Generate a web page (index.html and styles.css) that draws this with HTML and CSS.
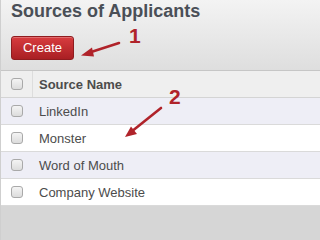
FILE: index.html
```html
<!DOCTYPE html>
<html>
<head>
<meta charset="utf-8">
<link rel="stylesheet" href="styles.css">
</head>
<body>
<div class="page">
  <div class="head">
    <h1 class="title">Sources of Applicants</h1>
    <div class="actions"><button class="btn">Create</button></div>
  </div>
  <div class="table">
    <div class="row thead">
      <div class="cell chk"><span class="box"></span></div>
      <div class="cell name">Source Name</div>
    </div>
    <div class="row odd">
      <div class="cell chk"><span class="box"></span></div>
      <div class="cell">LinkedIn</div>
    </div>
    <div class="row">
      <div class="cell chk"><span class="box"></span></div>
      <div class="cell">Monster</div>
    </div>
    <div class="row odd">
      <div class="cell chk"><span class="box"></span></div>
      <div class="cell">Word of Mouth</div>
    </div>
    <div class="row">
      <div class="cell chk"><span class="box"></span></div>
      <div class="cell">Company Website</div>
    </div>
  </div>
  <div class="foot"></div>

  <span class="num n1">1</span>
  <span class="num n2">2</span>
  <svg class="arrows" width="288" height="211" viewBox="0 0 288 211">
    <line x1="119" y1="43" x2="88" y2="53" stroke="#b0232a" stroke-width="2.6" stroke-linecap="round"/>
    <polygon points="81,55.5 92,47.5 94,56.5" fill="#b0232a"/>
    <line x1="161" y1="108" x2="131" y2="132" stroke="#b0232a" stroke-width="2.6" stroke-linecap="round"/>
    <polygon points="125,137 131,126.5 137,134" fill="#b0232a"/>
  </svg>
</div>
</body>
</html>
```
FILE: styles.css
```css
html, body {
  margin: 0;
  padding: 0;
  background: #ffffff;
}
.page {
  position: relative;
  display: flex;
  flex-direction: column;
  width: 100%;
  height: 100vh;
  min-height: 211px;
  overflow: hidden;
  font-family: "Liberation Sans", Arial, sans-serif;
  color: #4c4c4c;
  box-sizing: border-box;
  border-left: 1px solid #cfcfcf;
}
.head {
  height: 71px;
  flex: none;
  box-sizing: border-box;
  background: linear-gradient(#f3f3f3, #dedede);
  border-bottom: 1px solid #c6c6c6;
  padding-left: 10px;
}
.title {
  margin: 0;
  font-size: 18px;
  line-height: 22px;
  font-weight: bold;
  color: #4a4f57;
}
.actions {
  margin-top: 14px;
}
.btn {
  display: block;
  width: 63px;
  height: 24px;
  padding: 0;
  border: 1px solid #8f1c1f;
  border-radius: 3px;
  background: linear-gradient(#d83c3f, #a91f23);
  color: #ffffff;
  font-family: "Liberation Sans", Arial, sans-serif;
  font-size: 13px;
  line-height: 22px;
  box-shadow: inset 0 1px 0 rgba(255,255,255,0.25);
}
.table {
  flex: none;
}
.row {
  display: flex;
  height: 27px;
  box-sizing: border-box;
  border-bottom: 1px solid #dadada;
  align-items: stretch;
  font-size: 13px;
  background: #ffffff;
}
.row.odd {
  background: #eeeef6;
}
.row.thead {
  background: #efefef;
  font-weight: bold;
  border-bottom: 1px solid #d4d4d4;
}
.cell {
  display: flex;
  align-items: center;
  padding-top: 1px;
}
.chk {
  width: 32px;
  padding-left: 10px;
  box-sizing: border-box;
  padding-top: 0;
}
.thead .chk {
  border-right: 1px solid #dddddd;
}
.row .cell:not(.chk) {
  padding-left: 6px;
}
.box {
  display: block;
  width: 12px;
  height: 12px;
  box-sizing: border-box;
  border: 1px solid #a9a9a9;
  border-radius: 3px;
  background: linear-gradient(#f4f4f4, #dcdcdc);
}
.foot {
  flex: 1;
  min-height: 6px;
  background: #d6d6d6;
}
.num {
  position: absolute;
  font-weight: bold;
  font-size: 21px;
  line-height: 20px;
  color: #b0232a;
}
.n1 {
  left: 128px;
  top: 26px;
}
.n2 {
  left: 168px;
  top: 87px;
}
.arrows {
  position: absolute;
  left: -1px;
  top: 0;
}
```
